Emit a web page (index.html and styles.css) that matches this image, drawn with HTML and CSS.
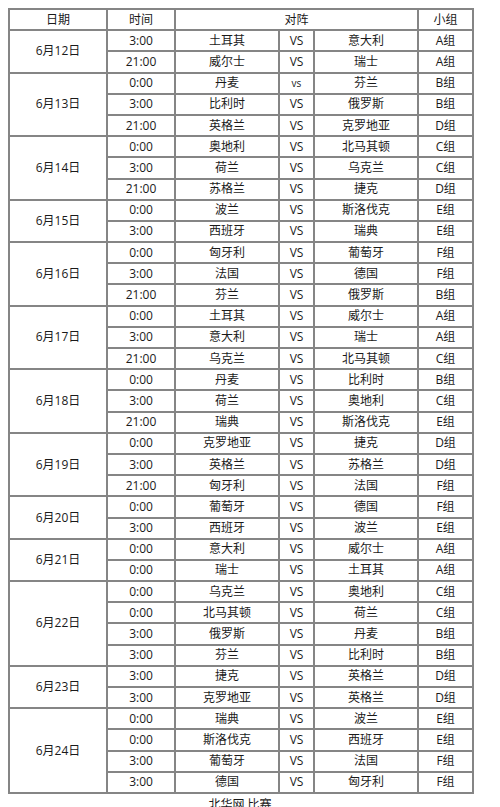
FILE: index.html
```html
<!DOCTYPE html>
<html>
<head>
<meta charset="utf-8">
<link rel="stylesheet" href="styles.css">
</head>
<body>
<table class="sched">
<colgroup><col class="c-date"><col class="c-time"><col class="c-team"><col class="c-vs"><col class="c-team"><col class="c-grp"></colgroup>
<tr><td>日期</td><td>时间</td><td colspan="3">对阵</td><td>小组</td></tr>
<tr><td rowspan="2">6月12日</td><td>3:00</td><td>土耳其</td><td>VS</td><td>意大利</td><td>A组</td></tr>
<tr><td>21:00</td><td>威尔士</td><td>VS</td><td>瑞士</td><td>A组</td></tr>
<tr><td rowspan="3">6月13日</td><td>0:00</td><td>丹麦</td><td class="small">vs</td><td>芬兰</td><td>B组</td></tr>
<tr><td>3:00</td><td>比利时</td><td>VS</td><td>俄罗斯</td><td>B组</td></tr>
<tr><td>21:00</td><td>英格兰</td><td>VS</td><td>克罗地亚</td><td>D组</td></tr>
<tr><td rowspan="3">6月14日</td><td>0:00</td><td>奥地利</td><td>VS</td><td>北马其顿</td><td>C组</td></tr>
<tr><td>3:00</td><td>荷兰</td><td>VS</td><td>乌克兰</td><td>C组</td></tr>
<tr><td>21:00</td><td>苏格兰</td><td>VS</td><td>捷克</td><td>D组</td></tr>
<tr><td rowspan="2">6月15日</td><td>0:00</td><td>波兰</td><td>VS</td><td>斯洛伐克</td><td>E组</td></tr>
<tr><td>3:00</td><td>西班牙</td><td>VS</td><td>瑞典</td><td>E组</td></tr>
<tr><td rowspan="3">6月16日</td><td>0:00</td><td>匈牙利</td><td>VS</td><td>葡萄牙</td><td>F组</td></tr>
<tr><td>3:00</td><td>法国</td><td>VS</td><td>德国</td><td>F组</td></tr>
<tr><td>21:00</td><td>芬兰</td><td>VS</td><td>俄罗斯</td><td>B组</td></tr>
<tr><td rowspan="3">6月17日</td><td>0:00</td><td>土耳其</td><td>VS</td><td>威尔士</td><td>A组</td></tr>
<tr><td>3:00</td><td>意大利</td><td>VS</td><td>瑞士</td><td>A组</td></tr>
<tr><td>21:00</td><td>乌克兰</td><td>VS</td><td>北马其顿</td><td>C组</td></tr>
<tr><td rowspan="3">6月18日</td><td>0:00</td><td>丹麦</td><td>VS</td><td>比利时</td><td>B组</td></tr>
<tr><td>3:00</td><td>荷兰</td><td>VS</td><td>奥地利</td><td>C组</td></tr>
<tr><td>21:00</td><td>瑞典</td><td>VS</td><td>斯洛伐克</td><td>E组</td></tr>
<tr><td rowspan="3">6月19日</td><td>0:00</td><td>克罗地亚</td><td>VS</td><td>捷克</td><td>D组</td></tr>
<tr><td>3:00</td><td>英格兰</td><td>VS</td><td>苏格兰</td><td>D组</td></tr>
<tr><td>21:00</td><td>匈牙利</td><td>VS</td><td>法国</td><td>F组</td></tr>
<tr><td rowspan="2">6月20日</td><td>0:00</td><td>葡萄牙</td><td>VS</td><td>德国</td><td>F组</td></tr>
<tr><td>3:00</td><td>西班牙</td><td>VS</td><td>波兰</td><td>E组</td></tr>
<tr><td rowspan="2">6月21日</td><td>0:00</td><td>意大利</td><td>VS</td><td>威尔士</td><td>A组</td></tr>
<tr><td>0:00</td><td>瑞士</td><td>VS</td><td>土耳其</td><td>A组</td></tr>
<tr><td rowspan="4">6月22日</td><td>0:00</td><td>乌克兰</td><td>VS</td><td>奥地利</td><td>C组</td></tr>
<tr><td>0:00</td><td>北马其顿</td><td>VS</td><td>荷兰</td><td>C组</td></tr>
<tr><td>3:00</td><td>俄罗斯</td><td>VS</td><td>丹麦</td><td>B组</td></tr>
<tr><td>3:00</td><td>芬兰</td><td>VS</td><td>比利时</td><td>B组</td></tr>
<tr><td rowspan="2">6月23日</td><td>3:00</td><td>捷克</td><td>VS</td><td>英格兰</td><td>D组</td></tr>
<tr><td>3:00</td><td>克罗地亚</td><td>VS</td><td>英格兰</td><td>D组</td></tr>
<tr><td rowspan="4">6月24日</td><td>0:00</td><td>瑞典</td><td>VS</td><td>波兰</td><td>E组</td></tr>
<tr><td>0:00</td><td>斯洛伐克</td><td>VS</td><td>西班牙</td><td>E组</td></tr>
<tr><td>3:00</td><td>葡萄牙</td><td>VS</td><td>法国</td><td>F组</td></tr>
<tr><td>3:00</td><td>德国</td><td>VS</td><td>匈牙利</td><td>F组</td></tr>
</table>
<p class="note">北华网 比赛</p>
</body>
</html>
```
FILE: styles.css
```css
html, body {
  margin: 0;
  padding: 0;
  background: #fff;
}
body {
  padding: 8px 0 0 8px;
  font-family: "Open Sans", "Noto Sans CJK SC", sans-serif;
  font-size: 12px;
  color: #1a1a1a;
}
.sched {
  border-collapse: collapse;
  table-layout: fixed;
  width: 464px;
}
.c-date { width: 98px; }
.c-time { width: 68px; }
.c-team { width: 104px; }
.c-vs { width: 35px; }
.c-grp { width: 55px; }
.sched td {
  border: 2px solid #858585;
  text-align: center;
  padding: 0;
  height: 19.2px;
  line-height: 16px;
  white-space: nowrap;
}
.sched td.small {
  font-size: 10px;
}
.note {
  margin: 3px 0 0 0;
  width: 464px;
  text-align: center;
  font-size: 12px;
  line-height: 16px;
}
```
